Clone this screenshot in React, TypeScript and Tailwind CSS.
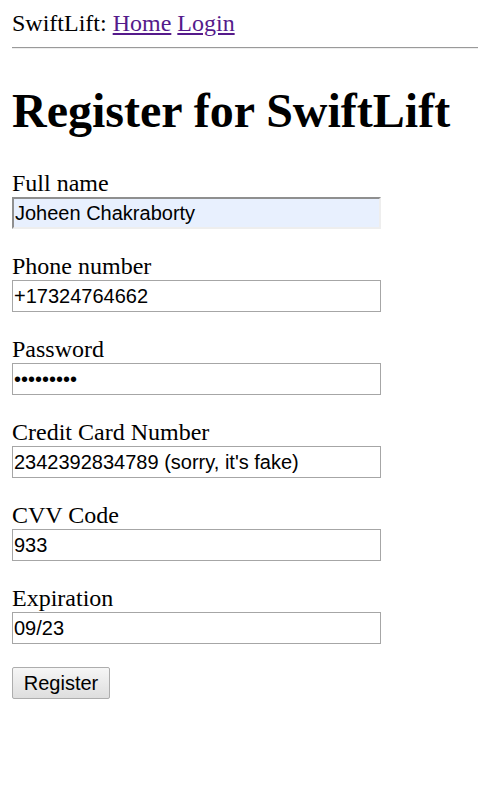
import React from 'react';

const fields = [
  { label: 'Full name', value: 'Joheen Chakraborty', type: 'text', filled: true },
  { label: 'Phone number', value: '+17324764662', type: 'text' },
  { label: 'Password', value: 'password1', type: 'password' },
  { label: 'Credit Card Number', value: "2342392834789 (sorry, it's fake)", type: 'text' },
  { label: 'CVV Code', value: '933', type: 'text' },
  { label: 'Expiration', value: '09/23', type: 'text' },
];

export default function App() {
  return (
    <div className="min-h-[805px] bg-white pl-3 pt-[9px] text-black font-['Liberation_Serif',serif]">
      <div className="text-[24px] leading-[28px] h-[28px]">
        SwiftLift:{' '}
        <a href="#" className="text-[#551a8b] underline">Home</a>{' '}
        <a href="#" className="text-[#551a8b] underline">Login</a>
      </div>
      <div className="mt-[10px] h-[2px] border-t border-t-[#9a9a9a] border-b border-b-[#eeeeee]" />
      <h1 className="mt-[34px] text-[48px] leading-[55px] font-bold whitespace-nowrap">Register for SwiftLift</h1>
      <form className="mt-[31px] flex flex-col" onSubmit={(e) => e.preventDefault()}>
        {fields.map((f) => (
          <div key={f.label} className="flex flex-col mb-[23px] last:mb-6">
            <label className="text-[24px] leading-[28px] h-[28px]">{f.label}</label>
            <input
              type={f.type}
              defaultValue={f.value}
              className={
                f.filled
                  ? 'h-8 w-[369px] px-px text-[20px] font-[\'Liberation_Sans\',Arial,sans-serif] bg-[#e8f0fe] border-2 border-t-[#8f8f8f] border-l-[#8f8f8f] border-b-[#eeeeee] border-r-[#eeeeee] outline-none'
                  : 'h-8 w-[369px] px-px text-[20px] font-[\'Liberation_Sans\',Arial,sans-serif] bg-white border border-[#a6a6a6] outline-none'
              }
            />
          </div>
        ))}
        <div>
          <button
            type="submit"
            className="h-8 w-[98px] text-[20px] font-['Liberation_Sans',Arial,sans-serif] border border-[#adadad] bg-gradient-to-b from-[#f6f6f6] to-[#dedede] rounded-[2px]"
          >
            Register
          </button>
        </div>
      </form>
    </div>
  );
}
